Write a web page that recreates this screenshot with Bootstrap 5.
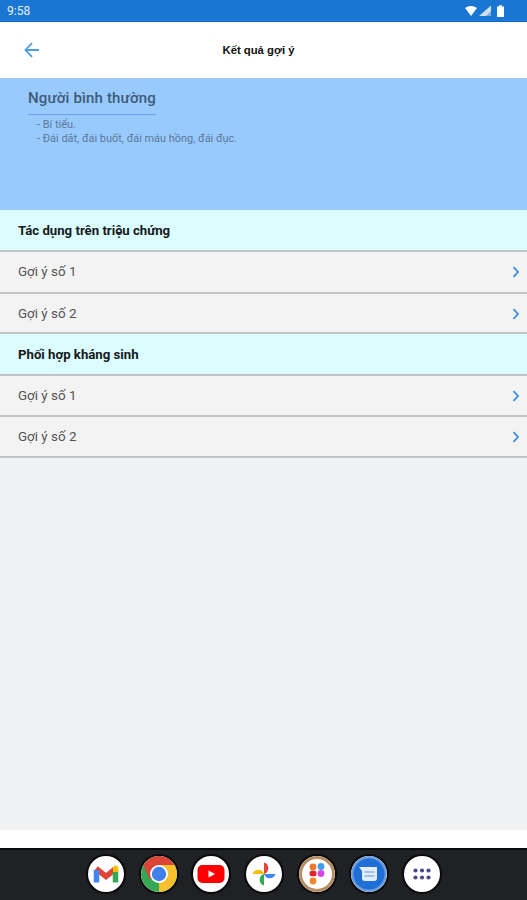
<!DOCTYPE html>
<html lang="en">

<head>
    <meta charset="UTF-8">
    <meta name="viewport" content="width=device-width, initial-scale=1.0">
    <title>Kết quả gợi ý</title>
    <link href="https://cdn.jsdelivr.net/npm/bootstrap@5.3.3/dist/css/bootstrap.min.css" rel="stylesheet">
    <script src="https://cdn.jsdelivr.net/npm/bootstrap@5.3.3/dist/js/bootstrap.bundle.min.js"></script>
    <style>
        html, body { height: 900px; overflow: hidden; }
        body { font-family: Roboto, "Liberation Sans", sans-serif; background: #f0f1f3; }
        .screen { height: 900px; }
        .status-bar { height: 22px; background: #1976d2; border-bottom: 1px solid #1268c4; color: #e8f0fa; font-size: 12px; padding: 0 23px 0 7px; }
        .top-bar { height: 56px; padding-left: 24px; }
        .top-title { font-size: 11.3px; font-weight: 700; color: #111; font-family: "Liberation Sans", sans-serif; left: 0; right: 10px; top: 0; line-height: 56px; }
        .hero { height: 132px; background: #99cafe; padding: 8px 0 0 28px; }
        .hero-title { font-size: 15px; font-weight: 500; color: #3f5a7a; line-height: 21px; padding-bottom: 5px; border-bottom: 1px solid #6f9cf5; letter-spacing: .15px; }
        .hero-text { font-size: 10.95px; line-height: 14px; color: #5a7898; padding: 3px 0 0 9px; }
        .group-head { height: 42px; background: #dcfdff; border-bottom: 2px solid #c0c4c6; font-size: 13.2px; font-weight: 700; color: #15191c; padding: 1px 0 0 18px; }
        .group-row { height: 41px; background: #f3f3f4; border-bottom: 2px solid #c2c4c6; font-size: 13.4px; color: #555; padding: 1px 7px 0 18px; }
        .row-tall { height: 42px; padding-top: 0; }
        .row-short { height: 40px; padding-top: 1px; }
        .row-short span { padding-top: 1px; }
        .bottom-strip { height: 18px; background: #fff; }
        .dock { height: 52px; background: #202124; border-top: 2px solid #08090a; gap: 16.67px; padding: 0 0 3px 1px; }
        .dock-icon { width: 36px; height: 36px; border-radius: 50%; background: #fff; box-shadow: 0 0 0 2px #0a0a0b; }
    </style>
</head>

<body>
    <div class="screen d-flex flex-column">
        <!-- Status bar -->
        <div class="status-bar d-flex align-items-center justify-content-between">
            <span>9:58</span>
            <svg width="39" height="12" viewBox="0 0 39 12">
                <path d="M0 3C3.500 0.200 8.500 0.200 12 3L6 11Z" fill="#fff"/>
                <path d="M14 11L26 0.500V11Z" fill="#cfe0f5"/>
                <path d="M21 11L26 6V11Z" fill="#7fa9dc"/>
                <path d="M32 1.500H34V0.200H37V1.500H39V12H32Z" fill="#fff"/>
            </svg>
        </div>

        <!-- Toolbar -->
        <div class="top-bar bg-white position-relative d-flex align-items-center">
            <svg width="15" height="16" viewBox="0 0 15 16" fill="none" stroke="#4a9be8" stroke-width="1.800">
                <path d="M15 8H2M8 1.200L1.500 8L8 14.800"/>
            </svg>
            <div class="top-title position-absolute text-center">Kết quả gợi ý</div>
        </div>

        <!-- Hero -->
        <div class="hero">
            <div class="d-inline-block">
                <div class="hero-title">Người bình thường</div>
            </div>
            <div class="hero-text">
                - Bí tiểu.<br>
                - Đái dắt, đái buốt, đái máu hồng, đái đục.
            </div>
        </div>

        <!-- Lists -->
        <div class="group-head d-flex align-items-center">Tác dụng trên triệu chứng</div>
        <div class="group-row row-tall d-flex align-items-center justify-content-between">
            <span>Gợi ý số 1</span>
            <svg width="8" height="12" viewBox="0 0 8 12" fill="none" stroke="#3b8fd9" stroke-width="1.800"><path d="M1.500 1.200L6 6L1.500 10.800"/></svg>
        </div>
        <div class="group-row row-short d-flex align-items-center justify-content-between">
            <span>Gợi ý số 2</span>
            <svg width="8" height="12" viewBox="0 0 8 12" fill="none" stroke="#3b8fd9" stroke-width="1.800"><path d="M1.500 1.200L6 6L1.500 10.800"/></svg>
        </div>
        <div class="group-head d-flex align-items-center">Phối hợp kháng sinh</div>
        <div class="group-row d-flex align-items-center justify-content-between">
            <span>Gợi ý số 1</span>
            <svg width="8" height="12" viewBox="0 0 8 12" fill="none" stroke="#3b8fd9" stroke-width="1.800"><path d="M1.500 1.200L6 6L1.500 10.800"/></svg>
        </div>
        <div class="group-row d-flex align-items-center justify-content-between">
            <span>Gợi ý số 2</span>
            <svg width="8" height="12" viewBox="0 0 8 12" fill="none" stroke="#3b8fd9" stroke-width="1.800"><path d="M1.500 1.200L6 6L1.500 10.800"/></svg>
        </div>

        <div class="flex-grow-1"></div>
        <div class="bottom-strip"></div>

        <!-- Dock -->
        <div class="dock d-flex align-items-center justify-content-center">
            <!-- Gmail -->
            <svg class="dock-icon" viewBox="0 0 36 36">
                <path d="M8 12.500l10 8 10-8" fill="none" stroke="#e04435" stroke-width="5.500"/>
                <path d="M8.500 26.500V14" stroke="#4285f4" stroke-width="5.500"/>
                <path d="M27.500 26.500V14" stroke="#34a853" stroke-width="5.500"/>
                <path d="M25 11.500l2.500-2q2.800 0 2.800 3v3.500h-5.300z" fill="#fbbc04"/>
            </svg>
            <!-- Chrome -->
            <svg class="dock-icon" viewBox="0 0 36 36">
                <circle cx="18" cy="18" r="18" fill="#34a853"/>
                <path d="M18 18L33.600 27A18 18 0 0 0 33.600 9H18z" fill="#fbc02d"/>
                <path d="M18 18L18 36A18 18 0 0 0 33.600 27z" fill="#fbc02d"/>
                <path d="M2.400 9A18 18 0 0 1 33.600 9H18L9 24z" fill="#db4437"/>
                <circle cx="18" cy="18" r="9" fill="#fff"/>
                <circle cx="18" cy="18" r="7.200" fill="#3f80ea"/>
            </svg>
            <!-- YouTube -->
            <svg class="dock-icon" viewBox="0 0 36 36">
                <rect x="4.500" y="9" width="27" height="18" rx="5" fill="#f00"/>
                <path d="M15.500 14.500l6.500 3.500-6.500 3.500z" fill="#fff"/>
            </svg>
            <!-- Photos -->
            <svg class="dock-icon" viewBox="0 0 36 36">
                <path d="M18 18V6.500A6 6 0 0 1 18 18z" fill="#ea4335"/>
                <path d="M18 18H29.500A6 6 0 0 1 18 18z" fill="#4285f4"/>
                <path d="M18 18V29.500A6 6 0 0 1 18 18z" fill="#34a853"/>
                <path d="M18 18H6.500A6 6 0 0 1 18 18z" fill="#fbbc04"/>
            </svg>
            <!-- Figma -->
            <svg class="dock-icon" viewBox="0 0 36 36">
                <circle cx="18" cy="18" r="16.500" fill="#fff" stroke="#b98d62" stroke-width="3"/>
                <circle cx="14" cy="11" r="3.400" fill="#f2762e"/>
                <circle cx="22" cy="10.500" r="3.400" fill="#3f9eea"/>
                <rect x="10.500" y="14.800" width="7" height="5.500" rx="2.500" fill="#e8202a"/>
                <circle cx="22" cy="17.500" r="3.400" fill="#d944e6"/>
                <circle cx="14" cy="25" r="3.400" fill="#f2862e"/>
            </svg>
            <!-- Messages -->
            <svg class="dock-icon" viewBox="0 0 36 36">
                <circle cx="18" cy="18" r="18" fill="#6a9de0"/>
                <circle cx="18" cy="18" r="15.500" fill="#1f6fd6"/>
                <path d="M8 11H26V22a3 3 0 0 1-3 3H14a3 3 0 0 1-3-3V15z" fill="#e3edfc"/>
                <path d="M13.500 16H23.500M13.500 20H23.500" stroke="#8db3ea" stroke-width="1.500"/>
            </svg>
            <!-- Apps -->
            <svg class="dock-icon" viewBox="0 0 36 36" fill="#4a4a86">
                <circle cx="11.500" cy="14.500" r="2.100"/><circle cx="18" cy="14.500" r="2.100"/><circle cx="24.500" cy="14.500" r="2.100"/>
                <circle cx="11.500" cy="21.500" r="2.100"/><circle cx="18" cy="21.500" r="2.100"/><circle cx="24.500" cy="21.500" r="2.100"/>
            </svg>
        </div>
    </div>
</body>

</html>
